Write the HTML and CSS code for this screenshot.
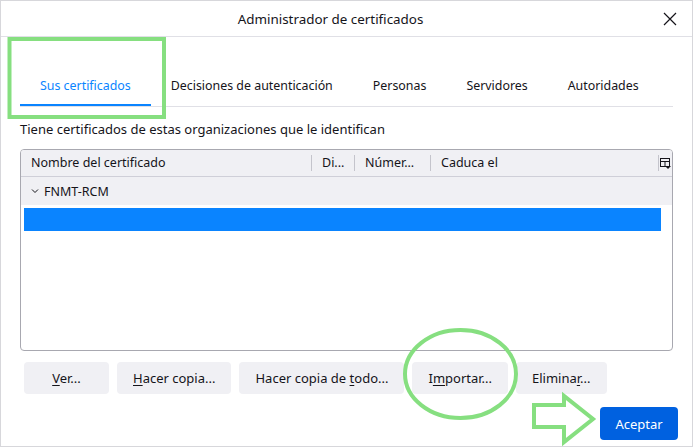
FILE: index.html
```html
<!DOCTYPE html>
<html lang="es">
<head>
    <meta charset="UTF-8">
    <title>Administrador de certificados</title>
    <link rel="stylesheet" href="styles.css">
</head>
<body>
<div class="dialog">
    <div class="titlebar">
        <div></div>
        <div class="title">Administrador de certificados</div>
        <div class="close">
            <svg width="14" height="14" viewBox="0 0 14 14">
                <path d="M1 1 L13 13 M13 1 L1 13" stroke="#15141a" stroke-width="1.2" fill="none"/>
            </svg>
        </div>
    </div>

    <div class="content">
        <div class="tabs">
            <div class="tab selected">Sus certificados</div>
            <div class="tab">Decisiones de autenticación</div>
            <div class="tab">Personas</div>
            <div class="tab">Servidores</div>
            <div class="tab">Autoridades</div>
        </div>

        <div class="desc">Tiene certificados de estas organizaciones que le identifican</div>

        <div class="tree">
            <div class="tree-head">
                <div class="col col-name">Nombre del certificado</div>
                <div class="col col-dev">Di...</div>
                <div class="col col-num">Númer...</div>
                <div class="col col-exp">Caduca el</div>
                <div class="col-picker">
                    <svg width="11" height="12" viewBox="0 0 11 12">
                        <rect x="0.5" y="0.5" width="9" height="8" fill="none" stroke="#15141a"/>
                        <path d="M0.5 3.5 H9.5 M5 3.5 V8.5" stroke="#15141a" fill="none"/>
                        <path d="M5 8 H11 L8 11 Z" fill="#15141a"/>
                    </svg>
                </div>
            </div>
            <div class="group">
                <svg class="twisty" width="8" height="6" viewBox="0 0 8 6">
                    <path d="M1 1.5 L4 4.5 L7 1.5" stroke="#15141a" fill="none"/>
                </svg>
                <span>FNMT-RCM</span>
            </div>
            <div class="row selected"></div>
        </div>

        <div class="actions">
            <div class="btn"><span><u>V</u>er...</span></div>
            <div class="btn"><span><u>H</u>acer copia...</span></div>
            <div class="btn"><span>Hacer copia de <u>t</u>odo...</span></div>
            <div class="btn"><span>I<u>m</u>portar...</span></div>
            <div class="btn"><span>Elimina<u>r</u>...</span></div>
        </div>
    </div>

    <div class="footer">
        <div class="btn primary">Aceptar</div>
    </div>

    <svg class="marks" width="693" height="447" viewBox="0 0 693 447">
        <rect x="9.5" y="39" width="154.5" height="78" fill="none" stroke="#86df80" stroke-width="4"/>
        <ellipse cx="460.5" cy="374" rx="55.5" ry="44" fill="none" stroke="#86df80" stroke-width="4"/>
        <path d="M534 405 H564 V396 L593 419 L564 442 V427 H534 Z" fill="none" stroke="#86df80" stroke-width="4"/>
    </svg>
</div>
</body>
</html>
```

FILE: styles.css
```css
* {
    box-sizing: border-box;
}

html, body {
    margin: 0;
    padding: 0;
    background: #fff;
}

body {
    font-family: "Noto Sans", "Open Sans", sans-serif;
    font-size: 13px;
    color: #15141a;
}

.dialog {
    position: relative;
    width: 693px;
    height: 447px;
    border: 1px solid #d7d7db;
    display: flex;
    flex-flow: column nowrap;
}

.titlebar {
    height: 36px;
    flex: none;
    display: grid;
    grid-template-columns: 1fr auto 1fr;
    align-items: center;
    border-bottom: 1px solid #e0e0e6;
}

.title {
    font-size: 13.4px;
    padding-right: 32px;
}

.close {
    display: flex;
    justify-content: flex-end;
    padding-right: 15px;
    padding-top: 1px;
}

.close svg {
    display: block;
}

.content {
    padding: 0 19px;
}

.tabs {
    display: flex;
    padding-top: 29px;
    border-bottom: 1px solid #e0e0e6;
}

.tab {
    height: 40px;
    padding: 1px 20px 0;
    display: flex;
    align-items: center;
    border-bottom: 2px solid transparent;
    white-space: nowrap;
    font-size: 12.4px;
}

.tab.selected {
    color: #0a84ff;
    border-bottom-color: #0a84ff;
}

.desc {
    margin-top: 13px;
    line-height: 18px;
    height: 18px;
}

.tree {
    margin-top: 11px;
    height: 202px;
    border: 1px solid #a8a8b0;
    border-radius: 4px;
    overflow: hidden;
}

.tree-head {
    display: flex;
    align-items: center;
    height: 27px;
    background: #f0f0f4;
    border-bottom: 1px solid #cfcfd8;
    font-size: 12.5px;
}

.col {
    height: 16px;
    line-height: 16px;
    padding-left: 10px;
    border-right: 1px solid #c4c4cc;
    white-space: nowrap;
    overflow: hidden;
}

.col-name {
    width: 291px;
}

.col-dev {
    width: 43px;
}

.col-num {
    width: 76px;
}

.col-exp {
    width: 228px;
}

.col-picker {
    flex: 1;
    display: flex;
    justify-content: center;
    padding-top: 1px;
}

.col-picker svg {
    display: block;
}

.group {
    height: 28px;
    display: flex;
    align-items: center;
    padding-left: 10px;
    background: #f0f0f4;
    font-size: 12.5px;
}

.twisty {
    margin-right: 5px;
}

.row.selected {
    height: 23px;
    margin: 3px 11px 0 3px;
    background: #0a84ff;
}

.actions {
    display: flex;
    gap: 8px;
    margin-top: 11px;
    padding-left: 4px;
}

.btn {
    height: 32px;
    min-width: 85px;
    padding: 0 16px;
    display: flex;
    justify-content: center;
    align-items: center;
    background: #f0f0f4;
    border-radius: 4px;
    white-space: nowrap;
}

.btn u {
    text-underline-offset: 2px;
}

.footer {
    margin-top: auto;
    display: flex;
    justify-content: flex-end;
    padding: 0 14px 6px 0;
}

.btn.primary {
    min-width: 78px;
    height: 33px;
    padding: 0 14px;
    background: #0061e0;
    color: #fff;
}

.marks {
    position: absolute;
    left: -1px;
    top: -1px;
    pointer-events: none;
}
```
